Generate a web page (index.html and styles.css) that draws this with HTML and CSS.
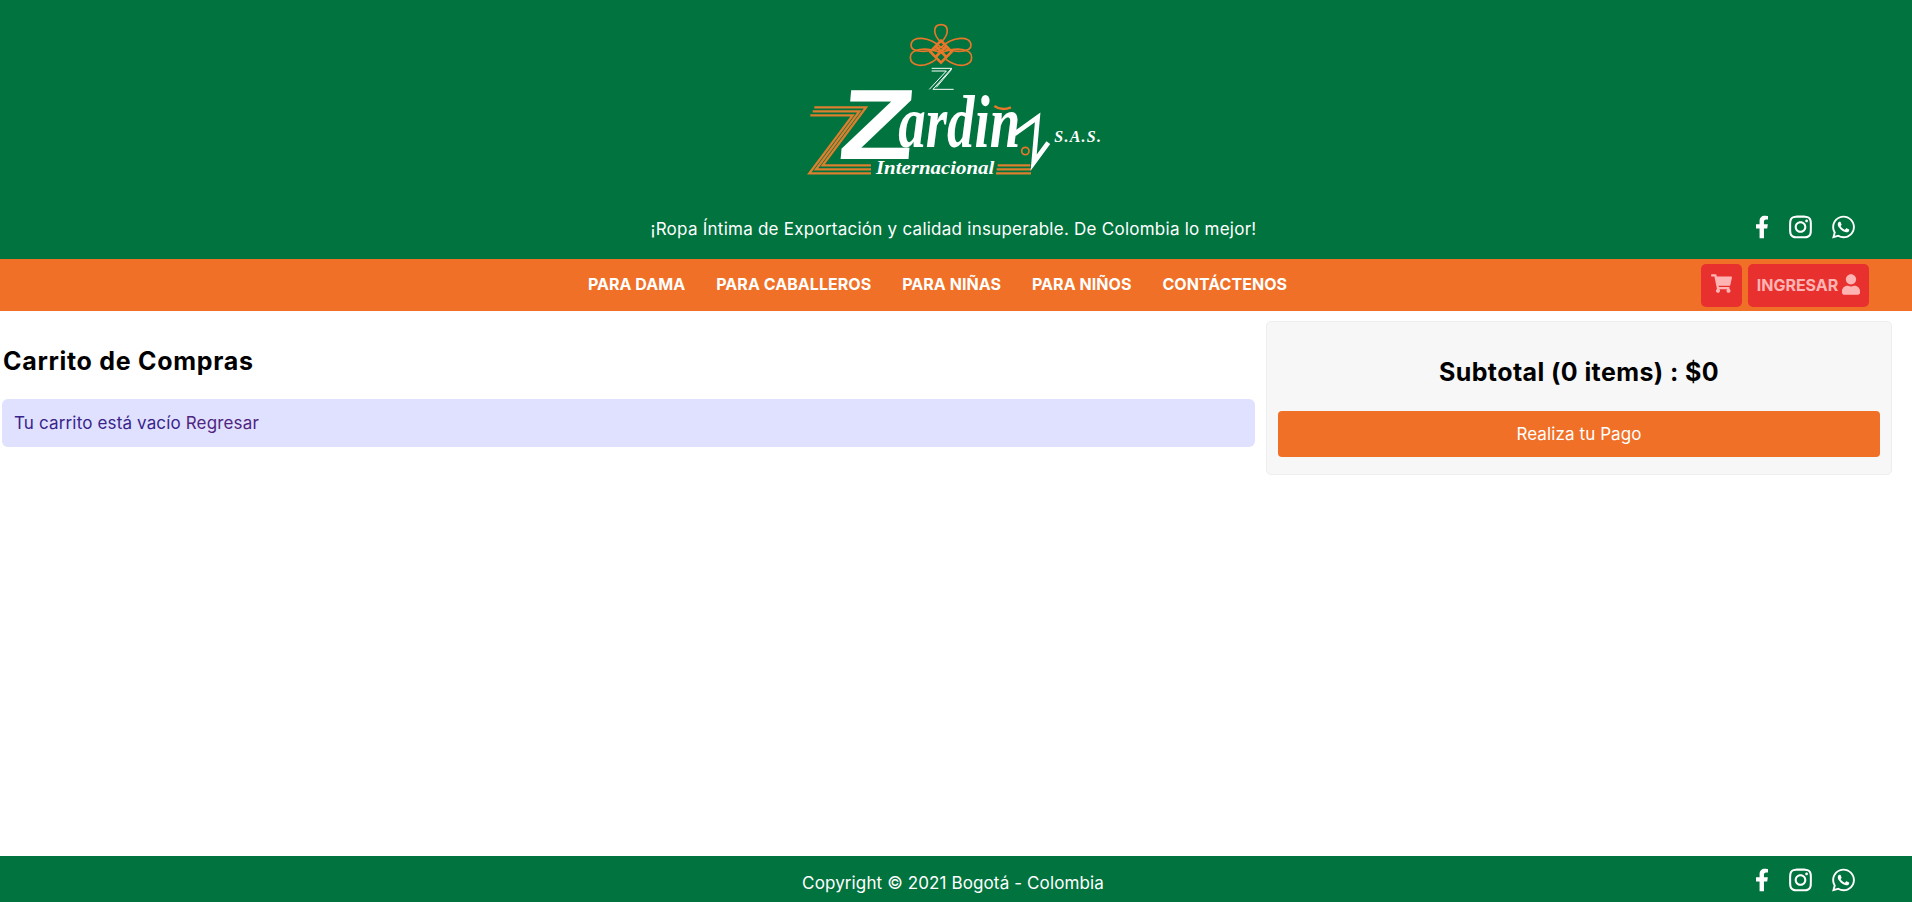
FILE: index.html
```html
<!DOCTYPE html>
<html lang="es">
<head>
<meta charset="utf-8">
<title>Zardin Internacional</title>
<link rel="stylesheet" href="styles.css">
</head>
<body>
<svg class="defs" width="0" height="0" aria-hidden="true">
  <symbol id="i-fb" viewBox="0 0 320 512"><path d="M279.14 288l14.22-92.66h-88.91v-60.13c0-25.35 12.42-50.06 52.24-50.06h40.42V6.26S260.43 0 225.36 0c-73.22 0-121.08 44.38-121.08 124.72v70.62H22.89V288h81.39v224h100.17V288z"/></symbol>
  <symbol id="i-ig" viewBox="0 0 448 512"><path d="M224.1 141c-63.6 0-114.9 51.3-114.9 114.9s51.3 114.9 114.9 114.9S339 319.5 339 255.9 287.7 141 224.1 141zm0 189.6c-41.1 0-74.7-33.5-74.7-74.7s33.5-74.7 74.7-74.7 74.7 33.5 74.7 74.7-33.6 74.7-74.7 74.7zm146.4-194.3c0 14.9-12 26.8-26.8 26.8-14.9 0-26.8-12-26.8-26.8s12-26.8 26.8-26.8 26.8 12 26.8 26.8zm76.1 27.2c-1.7-35.9-9.9-67.7-36.2-93.9-26.2-26.2-58-34.4-93.9-36.2-37-2.1-147.9-2.1-184.9 0-35.8 1.7-67.6 9.9-93.9 36.1s-34.4 58-36.2 93.9c-2.1 37-2.1 147.9 0 184.9 1.7 35.9 9.9 67.7 36.2 93.9s58 34.4 93.9 36.2c37 2.1 147.9 2.1 184.9 0 35.9-1.7 67.7-9.9 93.9-36.2 26.2-26.2 34.4-58 36.2-93.9 2.1-37 2.1-147.8 0-184.8zM398.8 388c-7.8 19.6-22.9 34.7-42.6 42.6-29.5 11.7-99.5 9-132.1 9s-102.7 2.6-132.1-9c-19.6-7.8-34.7-22.9-42.6-42.6-11.7-29.5-9-99.5-9-132.1s-2.6-102.7 9-132.1c7.8-19.6 22.9-34.7 42.6-42.6 29.5-11.7 99.5-9 132.1-9s102.7-2.6 132.1 9c19.6 7.8 34.7 22.9 42.6 42.6 11.7 29.5 9 99.5 9 132.1s2.7 102.7-9 132.1z"/></symbol>
  <symbol id="i-wa" viewBox="0 0 448 512"><path d="M380.9 97.1C339 55.1 283.2 32 223.9 32c-122.4 0-222 99.6-222 222 0 39.1 10.2 77.3 29.6 111L0 480l117.7-30.9c32.4 17.7 68.9 27 106.1 27h.1c122.3 0 224.1-99.6 224.1-222 0-59.3-25.2-115-67.1-157zm-157 341.6c-33.2 0-65.7-8.9-94-25.7l-6.7-4-69.8 18.3L72 359.2l-4.4-7c-18.5-29.4-28.2-63.3-28.2-98.2 0-101.7 82.8-184.5 184.6-184.5 49.3 0 95.6 19.2 130.4 54.1 34.8 34.9 56.2 81.2 56.1 130.5 0 101.8-84.9 184.6-186.6 184.6zm101.2-138.2c-5.5-2.8-32.8-16.2-37.9-18-5.1-1.9-8.8-2.8-12.5 2.8-3.7 5.6-14.3 18-17.6 21.8-3.2 3.7-6.5 4.2-12 1.4-32.6-16.3-54-29.1-75.5-66-5.7-9.8 5.7-9.1 16.3-30.3 1.8-3.7.9-6.9-.5-9.7-1.4-2.8-12.5-30.1-17.1-41.2-4.5-10.8-9.1-9.3-12.5-9.5-3.2-.2-6.9-.2-10.6-.2-3.7 0-9.7 1.4-14.8 6.9-5.1 5.6-19.4 19-19.4 46.3 0 27.3 19.9 53.7 22.6 57.4 2.8 3.7 39.1 59.7 94.8 83.8 35.2 15.2 49 16.5 66.6 13.9 10.7-1.6 32.8-13.4 37.4-26.4 4.6-13 4.6-24.1 3.2-26.4-1.3-2.5-5-3.9-10.5-6.6z"/></symbol>
</svg>

<header class="top">
  <div class="logo-wrap">
    <svg class="logo" viewBox="0 0 1050 540" role="img" aria-label="Zardín Internacional S.A.S.">
      <g class="ornament">
        <path d="M480 97C452 70 458 44 480 44S508 70 480 97Z"/>
        <path d="M480 112C445 80 392 75 390 105C389 128 440 130 480 112C520 130 571 128 570 105C568 75 515 80 480 112Z"/>
        <path d="M465 148C430 175 388 170 388 142C388 118 430 108 480 128C530 108 572 118 572 142C572 170 530 175 495 148"/>
        <path class="lattice" d="M480 92L512 125L480 158L448 125ZM464 108L496 141M496 108L464 141"/>
      </g>
      <g class="mini-z">
        <path d="M452 175H512L456 238H518"/>
        <path d="M452 183H496L445 238"/>
        <path d="M512 178L466 232"/>
      </g>
      <g class="stripes">
        <path d="M100 292H255L125 466H270"/>
        <path d="M95 304H235L105 478H270"/>
        <path d="M88 316H215L85 490H270"/>
        <path d="M650 466H748M647 478H750M645 490H750"/>
      </g>
      <text class="mark-z" x="168" y="446" textLength="225" lengthAdjust="spacingAndGlyphs" transform="translate(39 0) skewX(-5)">Z</text>
      <text class="mark-name" x="352" y="410" textLength="366" lengthAdjust="spacingAndGlyphs">ardin</text>
      <path class="mark-tail" d="M700 372L770 322L758 458L802 398"/>
      <path class="mark-breve" d="M640 288Q662 304 690 292"/>
      <circle class="mark-r" cx="733" cy="423" r="11"/>
      <text class="mark-small" x="820" y="397" textLength="140">S.A.S.</text>
      <text class="mark-int" x="285" y="492" textLength="355" lengthAdjust="spacingAndGlyphs">Internacional</text>
    </svg>
  </div>
  <div class="tag-row">
    <span></span>
    <p class="tagline">¡Ropa Íntima de Exportación y calidad insuperable. De Colombia lo mejor!</p>
    <div class="social">
      <a href="#" class="ic-fb"><svg><use href="#i-fb"/></svg></a>
      <a href="#" class="ic-ig"><svg><use href="#i-ig"/></svg></a>
      <a href="#" class="ic-wa"><svg><use href="#i-wa"/></svg></a>
    </div>
  </div>
</header>

<nav class="nav">
  <span></span>
  <ul class="nav-links">
    <li><a href="#">PARA DAMA</a></li>
    <li><a href="#">PARA CABALLEROS</a></li>
    <li><a href="#">PARA NIÑAS</a></li>
    <li><a href="#">PARA NIÑOS</a></li>
    <li><a href="#">CONTÁCTENOS</a></li>
  </ul>
  <div class="nav-actions">
    <a href="#" class="nav-btn cart-btn">
      <svg viewBox="0 0 576 512"><path d="M528.12 301.319l47.273-208C578.806 78.301 567.391 64 551.99 64H159.208l-9.166-44.81C147.758 8.021 137.93 0 126.529 0H24C10.745 0 0 10.745 0 24v16c0 13.255 10.745 24 24 24h69.883l70.248 343.435C147.325 417.1 136 435.222 136 456c0 30.928 25.072 56 56 56s56-25.072 56-56c0-15.674-6.447-29.835-16.824-40h209.647C430.447 426.165 424 440.326 424 456c0 30.928 25.072 56 56 56s56-25.072 56-56c0-22.172-12.888-41.332-31.579-50.405l5.517-24.276c3.413-15.018-8.002-29.319-23.403-29.319H218.117l-6.545-32h293.145c11.206 0 20.92-7.754 23.403-18.681z"/></svg>
    </a>
    <a href="#" class="nav-btn login-btn">INGRESAR
      <svg viewBox="0 0 448 512"><path d="M224 256c70.7 0 128-57.3 128-128S294.7 0 224 0 96 57.3 96 128s57.3 128 128 128zm89.6 32h-16.7c-22.2 10.2-46.9 16-72.9 16s-50.6-5.8-72.9-16h-16.7C60.2 288 0 348.2 0 422.4V464c0 26.5 21.5 48 48 48h352c26.5 0 48-21.5 48-48v-41.6c0-74.2-60.2-134.4-134.4-134.4z"/></svg>
    </a>
  </div>
</nav>

<main class="content">
  <section class="cart">
    <h1>Carrito de Compras</h1>
    <div class="alert">Tu carrito está vacío <a href="#">Regresar</a></div>
  </section>
  <aside class="summary">
    <h2>Subtotal (0 items) : $0</h2>
    <button class="pay" type="button">Realiza tu Pago</button>
  </aside>
</main>

<footer class="foot">
  <span></span>
  <p>Copyright © 2021 Bogotá - Colombia</p>
  <div class="social">
    <a href="#" class="ic-fb"><svg><use href="#i-fb"/></svg></a>
    <a href="#" class="ic-ig"><svg><use href="#i-ig"/></svg></a>
    <a href="#" class="ic-wa"><svg><use href="#i-wa"/></svg></a>
  </div>
</footer>
</body>
</html>
```
FILE: styles.css
```css
* { box-sizing: border-box; }
html, body { height: 100%; }
body {
  margin: 0;
  min-height: 902px;
  display: flex;
  flex-direction: column;
  background: #fff;
  color: #000;
  font-family: Inter, "Open Sans", "Liberation Sans", sans-serif;
  font-size: 17px;
  overflow: hidden;
}
.defs { position: absolute; }
a { color: inherit; text-decoration: none; }
p, h1, h2, ul { margin: 0; padding: 0; }

.top { height: 259px; background: #00733e; color: #fff; padding-top: 10px; }
.logo-wrap { display: flex; justify-content: center; height: 180px; }
.logo { width: 350px; height: 180px; }
.ornament path { fill: none; stroke: #e8772a; stroke-width: 5; }
.ornament .lattice { stroke-width: 8; }
.mini-z path { fill: none; stroke: #fff; stroke-width: 3; }
.stripes path { fill: none; stroke: #dc7f2e; stroke-width: 7; }
.mark-z { font: 700 300px "Liberation Sans", sans-serif; fill: #fff; }
.mark-name { font: italic 700 225px "Liberation Serif", serif; fill: #fff; }
.mark-tail { fill: none; stroke: #fff; stroke-width: 14; stroke-linejoin: miter; }
.mark-breve { fill: none; stroke: #e8772a; stroke-width: 7; }
.mark-r { fill: none; stroke: #e8772a; stroke-width: 5; }
.mark-small { font: italic 700 48px "Liberation Serif", serif; fill: #fff; }
.mark-int { font: italic 700 58px "Liberation Serif", serif; fill: #fff; }

.tag-row {
  display: grid;
  grid-template-columns: 1fr auto 1fr;
  align-items: center;
  height: 28px;
  margin-top: 24px;
}
.tagline { line-height: 28px; letter-spacing: .25px; padding-right: 5px; }
.social { display: flex; justify-self: end; align-items: center; gap: 20px; padding-right: 57px; }
.tag-row .social { padding-bottom: 4px; }
.social a { display: block; height: 26px; color: #fff; }
.social svg { display: block; height: 26px; fill: #fff; }
.ic-fb svg { width: 14px; }
.ic-ig svg { width: 23px; }
.ic-wa svg { width: 23px; }

.nav {
  height: 52px;
  background: #f07027;
  display: grid;
  grid-template-columns: 1fr auto 1fr;
  align-items: center;
  padding-right: 43px;
  padding-left: 6px;
  color: #fff;
}
.nav-links { display: flex; gap: 31px; list-style: none; font-weight: 700; font-size: 16px; letter-spacing: .05px; padding-bottom: 2px; }
.nav-actions { display: flex; justify-self: end; gap: 6px; }
.nav-btn {
  display: flex;
  align-items: center;
  justify-content: center;
  height: 43px;
  background: #e8312f;
  color: #ffb4b4;
  border-radius: 5px;
  font-weight: 700;
  font-size: 16px;
}
.nav-btn svg { fill: #ffb4b4; }
.cart-btn { width: 41px; }
.cart-btn svg { width: 21px; height: 19px; margin-bottom: 3px; }
.login-btn { width: 121px; gap: 4px; }
.login-btn svg { width: 18px; height: 21px; margin-bottom: 2px; }

.content { flex: 1; display: flex; align-items: flex-start; gap: 11px; padding: 10px 20px 0 2px; }
.cart { width: 1253px; }
.cart h1 { font-size: 25px; font-weight: 700; letter-spacing: .7px; line-height: 36px; margin: 22px 0 20px 1px; }
.alert {
  height: 48px;
  padding: 0 12px;
  display: flex;
  align-items: center;
  white-space: pre;
  background: #e0e0ff;
  border-radius: 6px;
  color: #38248a;
  letter-spacing: .15px;
}
.alert a { color: #4f2580; }
.summary {
  width: 626px;
  height: 154px;
  padding: 0 11px;
  background: #f7f7f7;
  border: 1px solid #eee;
  border-radius: 5px;
}
.summary h2 { font-size: 25px; font-weight: 700; letter-spacing: .4px; line-height: 36px; margin-top: 32px; margin-bottom: 21px; text-align: center; }
.pay {
  display: block;
  width: 100%;
  height: 46px;
  background: #f07027;
  color: #fff;
  border: 0;
  border-radius: 4px;
  font: inherit;
  letter-spacing: .1px;
}

.foot {
  height: 46px;
  background: #00733e;
  color: #fff;
  display: grid;
  grid-template-columns: 1fr auto 1fr;
  align-items: center;
}
.foot p { line-height: 46px; padding-top: 4px; padding-right: 6px; letter-spacing: .12px; }
.foot .social { padding-bottom: 3px; }
```
